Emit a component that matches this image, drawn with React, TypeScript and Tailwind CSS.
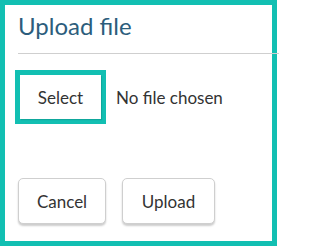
export default function App() {
  return (
    <div
      className="w-[277px] h-[246px] border-[5px] border-[#12bfb2] bg-white flex flex-col text-[#333]"
      style={{ fontFamily: 'Lato, "Noto Sans", sans-serif' }}
    >
      <h1 className="ml-[13px] mt-[9px] text-[24px] leading-none text-[#2c5d7c] font-normal">Upload file</h1>
      <div className="ml-[13px] mr-[-7px] mt-[15px] h-px bg-[#cfcfcf]" />
      <div className="mt-[16px] ml-[10px] flex items-center gap-[10px]">
        <div className="w-[91px] h-[54px] border-[5px] border-[#12bfb2] bg-white">
          <button className="w-full h-full bg-white text-[17px] leading-none text-[#333] shadow-[1px_1px_1px_rgba(0,0,0,0.12)]">
            Select
          </button>
        </div>
        <span className="text-[17px] leading-none text-[#333] mt-[1px]">No file chosen</span>
      </div>
      <div className="mt-[54px] ml-[13px] flex gap-[16px]">
        <button className="w-[88px] h-[46px] rounded-[5px] border border-[#cfcfcf] bg-white text-[17px] leading-none text-[#333] shadow-[0_2px_2px_rgba(0,0,0,0.2)]">
          Cancel
        </button>
        <button className="w-[93px] h-[46px] rounded-[5px] border border-[#cfcfcf] bg-white text-[17px] leading-none text-[#333] shadow-[0_2px_2px_rgba(0,0,0,0.2)]">
          Upload
        </button>
      </div>
    </div>
  );
}
